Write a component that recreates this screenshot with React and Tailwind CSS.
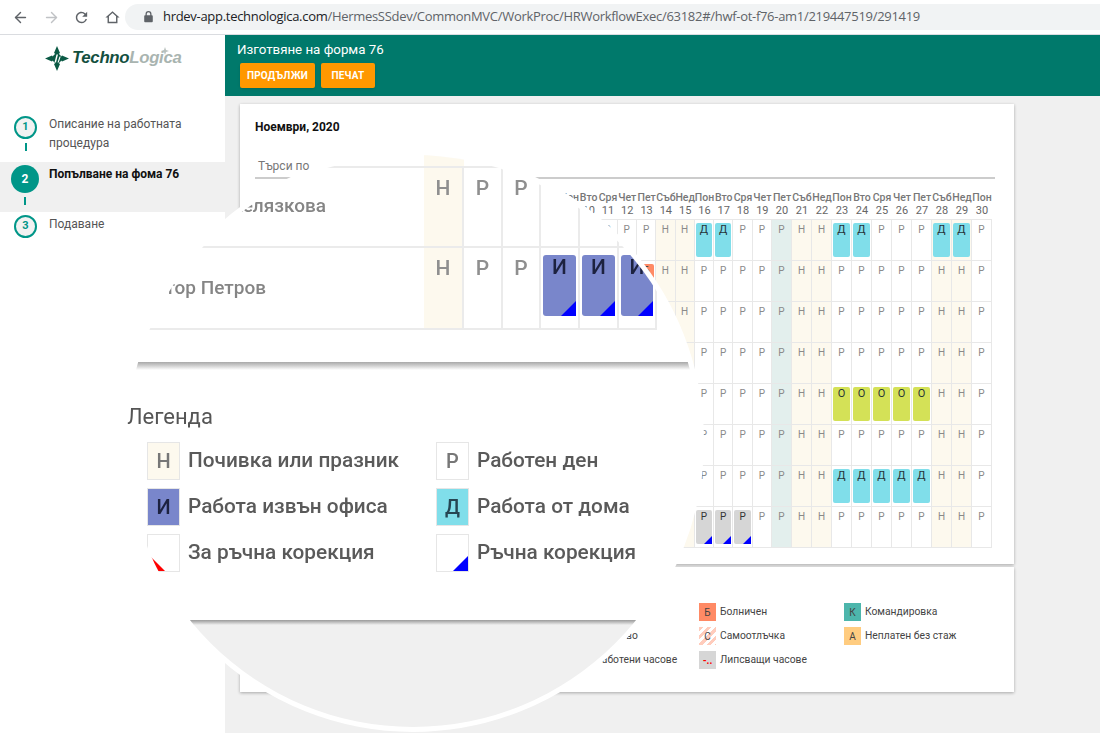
import React from "react";
import { ArrowLeft, ArrowRight } from "lucide-react";

const NAMES = ["Нед","Пон","Вто","Сря","Чет","Пет","Съб"];
const days = Array.from({ length: 30 }, (_, i) => i + 1);
const dow = (d) => NAMES[(d - 1) % 7];
const isOff = (d) => (d - 1) % 7 === 0 || (d - 1) % 7 === 6;

const rows = [
  { 16: "Д", 17: "Д", 23: "Д", 24: "Д", 28: "Д", 29: "Д" },
  { 13: "Б" },
  {},
  {},
  { 23: "О", 24: "О", 25: "О", 26: "О", 27: "О" },
  {},
  { 23: "Д", 24: "Д", 25: "Д", 26: "Д", 27: "Д" },
  { 16: "G", 17: "G", 18: "G" },
];

const GRID = "grid grid-cols-[minmax(0,1fr)_repeat(19,19.3px)_repeat(11,20px)]";

function Corner({ size = "s" }) {
  return size === "s" ? (
    <span className="absolute right-0 bottom-0 w-0 h-0 border-l-[8px] border-b-[8px] border-l-transparent border-b-[#0000ff]" />
  ) : (
    <span className="absolute right-0 bottom-0 w-0 h-0 border-l-[15px] border-b-[15px] border-l-transparent border-b-[#0000ff]" />
  );
}

function Cell({ day, val }) {
  const bg = day === 20 ? "bg-[#e3efed]" : isOff(day) ? "bg-[#fdf9ee]" : "bg-white";
  const base = isOff(day) ? "Н" : "Р";
  let inner = <div className="flex-1 my-[3px] text-center text-[10px] leading-[14px] text-[#8a8a8a]">{base}</div>;
  if (val === "Д" || val === "О" || val === "Б") {
    const c = val === "Д" ? "bg-[#80deea]" : val === "О" ? "bg-[#d4e157]" : "bg-[#ff8a65]";
    inner = <div className={`flex-1 my-[3px] mx-px rounded-[2px] text-center text-[11px] leading-[14px] text-[#263238] ${c}`}>{val}</div>;
  }
  if (val === "G") {
    inner = (
      <div className="relative flex-1 my-[3px] mx-px rounded-[2px] text-center text-[10px] leading-[14px] text-[#333] bg-[#d6d6d6]">
        Р
        <Corner />
      </div>
    );
  }
  return <div className={`flex flex-col h-[41px] border-r border-b border-[#e8e8e8] ${bg}`}>{inner}</div>;
}

function Step({ n, active }) {
  return active ? (
    <div className="w-[28px] h-[28px] rounded-full bg-[#009688] text-white text-[12px] font-bold flex items-center justify-center">{n}</div>
  ) : (
    <div className="w-[23px] h-[23px] rounded-full bg-[#f2f2f2] border-2 border-[#009688] text-[#009688] text-[11px] font-bold flex items-center justify-center">{n}</div>
  );
}

function Logo() {
  return (
    <div className="relative flex items-center h-[27px] gap-[3px] pl-[45px] font-['Liberation_Sans',sans-serif]">
      <svg width="24" height="25" viewBox="0 0 24 25">
        <path d="M12 0l3 7-3 2-3-2zM12 25l-3-7 3-2 3 2zM0 12.500l7-3 2 3-2 3zM24 12.500l-7 3-2-3 2-3z" fill="#0b5a45" />
        <path d="M12 6l6.500 6.500L12 19l-6.500-6.500z" fill="#0b5a45" />
        <path d="M9.500 16.500l2-8h1.500l-2 8zM12.500 16.500l2-6h1.200l-2 6z" fill="#fff" />
      </svg>
      <div className="text-[16.800px] font-bold italic tracking-[-0.3px] leading-none">
        <span className="text-[#14503f]">Techno</span>
        <span className="text-[#a9b4b0]">Logica</span>
      </div>
      <svg width="8" height="8" viewBox="0 0 8 8" className="absolute left-[161px] top-[2px]">
        <path d="M4 0l1 3 3 1-3 1-1 3-1-3-3-1 3-1z" fill="#b8c0bd" />
      </svg>
    </div>
  );
}

function LegendBox({ cls = "", text, corner, label }) {
  return (
    <div className="flex items-center gap-2">
      <div className={`relative w-[33px] h-[38px] border border-[#e6e6e6] flex items-center justify-center text-[20px] ${cls}`}>
        {text}
        {corner === "blue" && <Corner size="l" />}
        {corner === "red" && (
          <span className="absolute left-0 bottom-0 w-0 h-0 border-r-[17px] border-b-[17px] border-r-transparent border-b-[#ff0000]" />
        )}
      </div>
      <span className="text-[20.800px] font-medium text-[#5a5a5a] font-['Roboto',sans-serif] whitespace-nowrap">{label}</span>
    </div>
  );
}

function SmallItem({ cls, text, textCls = "text-[#444]", label }) {
  return (
    <div className="flex items-center gap-[4px] h-[18px] mb-[6px]">
      <div className={`w-[17px] h-[18px] flex items-center justify-center text-[10px] ${textCls} ${cls}`}>{text}</div>
      <span className="text-[10.300px] text-[#444] whitespace-nowrap">{label}</span>
    </div>
  );
}

function ZoomCol({ tan, children, top }) {
  return (
    <div className={`h-[82px] pt-[8px] border-r-2 border-b-2 border-[#ebebeb] text-center text-[21px] leading-[24px] text-[#8f8f8f] font-medium ${tan ? "bg-[#fdf9ee]" : ""} ${top ? "border-t-2" : ""}`}>
      {children}
    </div>
  );
}

function ZoomChip() {
  return (
    <div className="relative h-[61px] mt-[7px] mx-[2px] rounded-[3px] bg-[#7986cb] text-center text-[21px] leading-[24px] font-medium text-[#1d2240]">
      И
      <Corner size="l" />
    </div>
  );
}

export default function App() {
  return (
    <div className="relative w-[1100px] h-[733px] overflow-hidden bg-[#f0f0f0] font-['Roboto',sans-serif]">
      {/* browser bar */}
      <div className="h-[35px] bg-white border-b border-[#dadce0] flex items-center">
        <div className="w-[125px] flex items-center pl-[12px] gap-[13.500px] shrink-0">
          <ArrowLeft size={17} className="text-[#5f6368]" strokeWidth={2} />
          <ArrowRight size={17} className="text-[#c0c2c5]" strokeWidth={2} />
          <svg width="17" height="17" viewBox="0 0 24 24" fill="#5f6368">
            <path d="M17.650 6.350A7.958 7.958 0 0 0 12 4c-4.420 0-7.990 3.580-7.990 8s3.570 8 7.990 8c3.730 0 6.840-2.550 7.730-6h-2.080A5.990 5.990 0 0 1 12 18c-3.310 0-6-2.690-6-6s2.690-6 6-6c1.660 0 3.140.690 4.220 1.780L13 11h7V4l-2.350 2.350z" />
          </svg>
          <svg width="17" height="17" viewBox="0 0 24 24" fill="#5f6368">
            <path d="M12 5.690l5 4.500V18h-10v-7.810l5-4.500M12 3L2 12h3v8h14v-8h3L12 3z" />
          </svg>
        </div>
        <div className="flex-1 h-[26px] rounded-l-full bg-[#f1f3f4] flex items-center pl-[18px]">
          <svg width="11" height="12" viewBox="0 0 12 14" fill="#5f6368" className="mr-[9px]">
            <path d="M10 5H9.500V3.500a3.500 3.500 0 0 0-7 0V5H2a1 1 0 0 0-1 1v6a1 1 0 0 0 1 1h8a1 1 0 0 0 1-1V6a1 1 0 0 0-1-1zM4 3.500a2 2 0 0 1 4 0V5H4z" />
          </svg>
          <span className="text-[13px] whitespace-nowrap text-[#5f6368] font-['Open_Sans',sans-serif] tracking-[-0.295px]">
            <span className="text-[#202124]">hrdev-app.technologica.com</span>
            /HermesSSdev/CommonMVC/WorkProc/HRWorkflowExec/63182#/hwf-ot-f76-am1/219447519/291419
          </span>
        </div>
      </div>

      <div className="flex h-[698px]">
        {/* sidebar */}
        <aside className="w-[225px] shrink-0 bg-white">
          <div className="pt-[10px] h-[72px]">
            <Logo />
          </div>
          <div className="flex h-[55px] pl-[14px] pt-[9px] gap-[12px]">
            <div className="flex flex-col items-center w-[23px]">
              <Step n="1" />
              <div className="w-[2px] h-[8px] mt-[4px] bg-[#009688]" />
            </div>
            <div className="text-[12px] leading-[19px] text-[#555] -mt-px">
              Описание на работната
              <br />
              процедура
            </div>
          </div>
          <div className="flex h-[50px] bg-[#f0f0f0] pl-[11px] pt-[3px] gap-[10px]">
            <div className="flex flex-col items-center w-[28px]">
              <Step n="2" active />
              <div className="w-[2px] h-[8px] mt-[4px] bg-[#009688]" />
            </div>
            <div className="text-[12px] leading-[19px] font-bold text-[#111]">Попълване на фома 76</div>
          </div>
          <div className="flex pl-[14px] pt-[3px] gap-[12px]">
            <Step n="3" />
            <div className="text-[12px] leading-[19px] text-[#555]">Подаване</div>
          </div>
        </aside>

        {/* main */}
        <main className="flex-1 min-w-0">
          <div className="h-[61px] bg-[#00796b] pl-[12px] pt-[6px]">
            <div className="text-[13.300px] leading-[17px] text-white">Изготвяне на форма 76</div>
            <div className="flex gap-[6px] ml-[3px] mt-[5px]">
              <button className="h-[25px] w-[75px] rounded-[2px] bg-[#ff9800] text-white text-[10px] font-bold tracking-[0.2px] shadow-sm">ПРОДЪЛЖИ</button>
              <button className="h-[25px] w-[54px] rounded-[2px] bg-[#ff9800] text-white text-[10px] font-bold tracking-[0.2px] shadow-sm">ПЕЧАТ</button>
            </div>
          </div>

          <div className="w-[774px] ml-[15px] mt-[8px]">
            <section className="h-[460px] bg-white shadow-[0_1px_3px_rgba(0,0,0,0.3)] pl-[15px] pr-[19px] pt-[15px]">
              <div className="text-[12px] leading-[16px] font-bold text-[#111]">Ноември, 2020</div>
              <div className="h-[44px] border-b-2 border-[#cccccc] flex items-end pb-[2px] pl-[3px] text-[12px] text-[#777]">
                Търси по
              </div>
              <div className="mr-[3px] mt-[12px]">
                <div className={`${GRID} h-[29px] border-b border-[#e8e8e8]`}>
                  <div />
                  {days.map((d) => (
                    <div key={d} className="flex flex-col items-center text-[10.500px] leading-[13px] text-[#777] whitespace-nowrap">
                      <span className="font-medium">{dow(d)}</span>
                      <span className="text-[11px] text-[#666]">{d}</span>
                    </div>
                  ))}
                </div>
                {rows.map((r, i) => (
                  <div key={i} className={GRID}>
                    <div className="border-b border-[#e8e8e8]" />
                    {days.map((d) => (
                      <Cell key={d} day={d} val={r[d]} />
                    ))}
                  </div>
                ))}
              </div>
            </section>

            <section className="h-[125px] mt-[3px] bg-white shadow-[0_1px_3px_rgba(0,0,0,0.3)] pt-[36px] pl-[323px] flex">
              <div className="w-[136px]">
                <SmallItem cls="bg-[#c5e1a5]" text="П" label="Отпуск" />
                <SmallItem cls="bg-[#ffe082]" text="М" label="Дежурство" />
                <SmallItem cls="bg-[#eeeeee]" text="Х" label="Отработени часове" />
              </div>
              <div className="w-[145px]">
                <SmallItem cls="bg-[#ff8a65]" text="Б" label="Болничен" />
                <SmallItem cls="bg-[repeating-linear-gradient(135deg,#ffccbc_0,#ffccbc_3px,#ffffff_3px,#ffffff_6px)]" text="С" label="Самоотлъчка" />
                <SmallItem cls="bg-[#d6d6d6] font-bold" textCls="text-[#ff0000]" text="-.." label="Липсващи часове" />
              </div>
              <div>
                <SmallItem cls="bg-[#4db6ac]" text="К" label="Командировка" />
                <SmallItem cls="bg-[#ffcc80]" text="А" label="Неплатен без стаж" />
              </div>
            </section>
          </div>
        </main>
      </div>

      {/* magnifier */}
      <div className="absolute left-[122px] top-[150px] w-[582px] h-[582px] rounded-full border-[5px] border-white bg-white overflow-hidden">
        <div className="h-[207px] blur-[0.6px]">
          <div className="grid grid-cols-[297px_40px_39px_38px_39px_39px_38px] w-[530px]">
            <div className="h-[11px]" />
            <div className="h-[11px] bg-[#fdf9ee]" />
            <div className="col-span-5" />

            <div className="h-[82px] border-t-2 border-b-2 border-[#ebebeb] flex items-center justify-end pb-[2px] pr-[98px] text-[19px] font-medium text-[#858585]">
              <div className="w-[86px] flex justify-end overflow-hidden whitespace-nowrap">Желязкова</div>
            </div>
            <ZoomCol tan top>Н</ZoomCol>
            <ZoomCol top>Р</ZoomCol>
            <ZoomCol top>Р</ZoomCol>
            <ZoomCol />
            <ZoomCol />
            <ZoomCol />

            <div className="h-[82px] border-b-2 border-[#ebebeb] flex items-center justify-end pr-[158px] text-[19px] font-medium text-[#858585]">
              <div className="w-[101px] flex justify-end overflow-hidden whitespace-nowrap">Виктор Петров</div>
            </div>
            <ZoomCol tan>Н</ZoomCol>
            <ZoomCol>Р</ZoomCol>
            <ZoomCol>Р</ZoomCol>
            <div className="h-[82px] border-r-2 border-b-2 border-[#ebebeb]"><ZoomChip /></div>
            <div className="h-[82px] border-r-2 border-b-2 border-[#ebebeb]"><ZoomChip /></div>
            <div className="h-[82px] border-r-2 border-b-2 border-[#ebebeb]"><ZoomChip /></div>
          </div>
        </div>

        <div className="h-[8px] bg-gradient-to-b from-[#a8a8a8] to-white" />

        <div className="h-[250px] pt-[33px] blur-[0.6px]">
          <div className="text-[22px] leading-[28px] text-[#555]">Легенда</div>
          <div className="grid grid-cols-[289px_1fr] gap-y-[8px] ml-[20px] mt-[11px]">
            <LegendBox cls="bg-[#fdf9ee] text-[#777] font-medium" text="Н" label="Почивка или празник" />
            <LegendBox cls="bg-white text-[#777] font-medium" text="Р" label="Работен ден" />
            <LegendBox cls="bg-[#7986cb] border-[#7986cb] text-[#1d2240] font-medium" text="И" label="Работа извън офиса" />
            <LegendBox cls="bg-[#80deea] border-[#80deea] text-[#264653] font-medium" text="Д" label="Работа от дома" />
            <LegendBox corner="red" label="За ръчна корекция" />
            <LegendBox corner="blue" label="Ръчна корекция" />
          </div>
        </div>

        <div className="h-[120px] bg-[#f0f0f0]">
          <div className="h-[5px] bg-gradient-to-b from-[#9a9a9a] to-[#f0f0f0]" />
        </div>
      </div>
    </div>
  );
}
